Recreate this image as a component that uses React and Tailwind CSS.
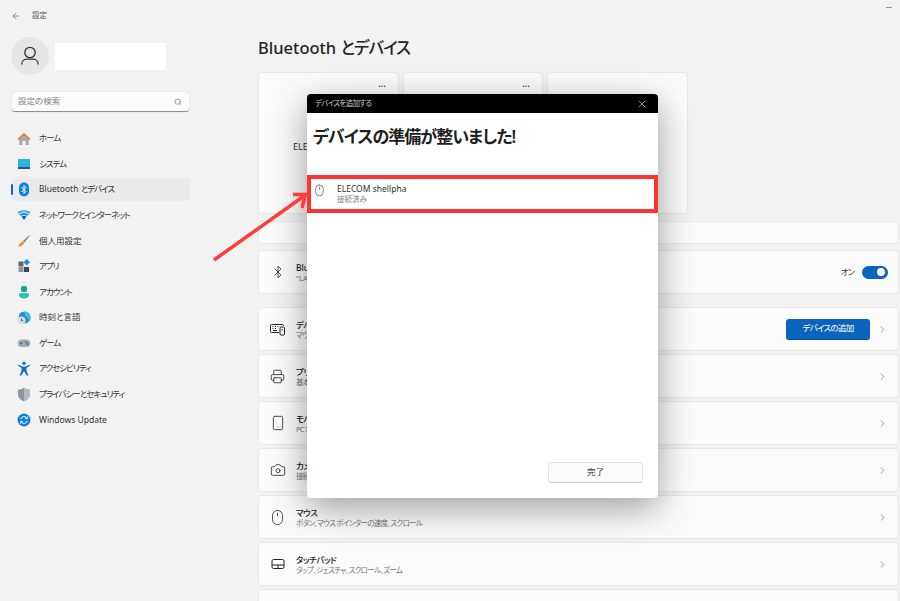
import React from "react";
import { ArrowLeft, Bluetooth, Camera, ChevronRight, Mouse, Printer, Search, Smartphone, X } from "lucide-react";

const FONT = "font-['Noto_Sans','Noto_Sans_CJK_JP',sans-serif] [font-feature-settings:'palt']";

const AvatarIcon = () => (
  <svg width="20" height="20" viewBox="0 0 20 20" fill="none" stroke="#333" strokeWidth="1.300">
    <circle cx="10" cy="6.500" r="5.200" />
    <path d="M1.800 18.500c0-3.200 2.200-5.300 4.700-5.300h7c2.500 0 4.700 2.100 4.700 5.300" />
  </svg>
);
const HomeIcon = () => (
  <svg width="14" height="14" viewBox="0 0 14 14">
    <path d="M2.200 6.500 7 2.500l4.800 4V13H8.600V9H5.400v4H2.200z" fill="#a8adb3" />
    <path d="M.6 7 7 1l6.400 6-.9.9L7 2.900 1.500 7.900z" fill="#e8701a" />
  </svg>
);
const SystemIcon = () => (
  <svg width="14" height="14" viewBox="0 0 14 14">
    <rect x="1" y="2" width="12" height="8" fill="#2fb2d8" />
    <rect x="1" y="10" width="12" height="2" fill="#0f5f8f" />
  </svg>
);
const BtIcon = () => (
  <svg width="12" height="15" viewBox="0 0 12 15">
    <rect x="1" y="0.500" width="10" height="14" rx="5" fill="#0a84e0" />
    <path d="M3.500 5 8 9.500 6 11.500V3.500l2 2L3.500 10" fill="none" stroke="#fff" strokeWidth="1" />
  </svg>
);
const WifiIcon = () => (
  <svg width="14" height="12" viewBox="0 0 14 12">
    <path d="M.5 3.500C4 .5 10 .5 13.500 3.500L12 5C9 2.800 5 2.800 2 5z" fill="#35b4f0" />
    <path d="M2.500 5.500C5 3.500 9 3.500 11.500 5.500L10 7C8 5.800 6 5.800 4 7z" fill="#1a8fe0" />
    <path d="M4.500 7.500C6 6.500 8 6.500 9.500 7.500L7 11z" fill="#0a5fb0" />
  </svg>
);
const BrushIcon = () => (
  <svg width="14" height="14" viewBox="0 0 14 14">
    <path d="M12.500 1 13 1.500 7.500 8.500 5.800 7z" fill="#8b8f94" />
    <path d="M5.500 7.300 7.200 8.800C6.500 11 4 12.800 1 13c1.500-1.500 1.800-4.500 4.500-5.700z" fill="#ee8a2c" />
  </svg>
);
const AppsIcon = () => (
  <svg width="14" height="14" viewBox="0 0 14 14">
    <rect x="1.500" y="2.500" width="5" height="5" fill="#5c6670" />
    <rect x="1.500" y="8" width="5" height="5" fill="#8d949b" />
    <rect x="7" y="8" width="5" height="5" fill="#3f474f" />
    <rect x="7.500" y="1" width="4.500" height="4.500" fill="#1f8fe6" transform="rotate(45 9.750 3.250)" />
  </svg>
);
const AccountIcon = () => (
  <svg width="14" height="14" viewBox="0 0 14 14">
    <circle cx="7" cy="4" r="3.200" fill="#1fa08f" />
    <path d="M2 9.500C2 8.500 3 8 4 8h6c1 0 2 .5 2 1.500C12 12.500 9.500 13.500 7 13.500S2 12.500 2 9.500z" fill="#2cc4ae" />
  </svg>
);
const TimeIcon = () => (
  <svg width="14" height="14" viewBox="0 0 14 14">
    <circle cx="7.500" cy="6.500" r="6" fill="#1e93cf" />
    <path d="M7.500.5a6 6 0 0 1 6 6c0 1-.3 2-.7 2.800L8 4.500z" fill="#37c0e0" />
    <circle cx="4.500" cy="9.500" r="4" fill="#d9dde1" />
    <path d="M4.500 7.500v2.200h1.800" fill="none" stroke="#445" strokeWidth=".8" />
  </svg>
);
const GameIcon = () => (
  <svg width="14" height="14" viewBox="0 0 14 14">
    <rect x="0.800" y="3.500" width="12.400" height="7.500" rx="3.700" fill="#a3a9af" />
    <path d="M3 7.200h2.400M4.200 6v2.400" stroke="#444c54" strokeWidth=".8" />
    <circle cx="9" cy="6.300" r=".9" fill="#1b6fc4" />
    <circle cx="10.400" cy="8" r=".9" fill="#1b6fc4" />
  </svg>
);
const AccessIcon = () => (
  <svg width="14" height="15" viewBox="0 0 14 15">
    <circle cx="7" cy="2.200" r="1.700" fill="#0f6fc6" />
    <path d="M1.500 3.500 5 5.400h4l3.500-1.900.6 1.100L9.500 7v2.500l1.800 5h-1.500L7 10l-2.800 4.500H2.700l1.800-5V7L.9 4.600z" fill="#0f6fc6" />
  </svg>
);
const ShieldIcon = () => (
  <svg width="14" height="15" viewBox="0 0 14 15">
    <path d="M7 .8c1.800 1.300 3.700 1.900 6 2v4.500c0 3.300-2.500 5.800-6 7-3.500-1.200-6-3.700-6-7V2.800c2.300-.1 4.200-.7 6-2z" fill="#8d979f" />
    <path d="M7 .8c1.800 1.300 3.700 1.900 6 2v4.500c0 3.300-2.500 5.800-6 7z" fill="#b3bac0" />
  </svg>
);
const UpdateIcon = () => (
  <svg width="14" height="14" viewBox="0 0 14 14">
    <circle cx="7" cy="7" r="6.500" fill="#0f7fdb" />
    <path d="M3.700 6.200A3.400 3.400 0 0 1 9.800 5M10.300 7.800A3.400 3.400 0 0 1 4.200 9" fill="none" stroke="#fff" strokeWidth="1" />
    <path d="M10.300 3.300v2.300H8M3.700 10.700V8.400H6" fill="none" stroke="#fff" strokeWidth=".9" />
  </svg>
);
const KeyboardIcon = () => (
  <svg width="15" height="14" viewBox="0 0 15 14" fill="none" stroke="#222" strokeWidth="1">
    <path d="M9 10.500H1.500a1 1 0 0 1-1-1v-6a1 1 0 0 1 1-1h11a1 1 0 0 1 1 1V4" />
    <path d="M2.500 4.500h1M5 4.500h1M7.500 4.500h1M2.500 6.500h1M5 6.500h1M3 8.500h4" />
    <rect x="10" y="5" width="4.500" height="8" rx="1" />
    <path d="M12.200 7v1.500" />
  </svg>
);
const TouchpadIcon = () => (
  <svg width="14" height="12" viewBox="0 0 14 12" fill="none" stroke="#222" strokeWidth="1">
    <rect x="1" y="1.500" width="12" height="9" rx="1.500" />
    <path d="M1 7h12M7 7v3.500" />
  </svg>
);

const KANA = "tracking-[-1px]";
const nav = [
  [HomeIcon, "ホーム", KANA],
  [SystemIcon, "システム", KANA],
  [BtIcon, <>Bluetooth <span className={KANA}>とデバイス</span></>, "", true],
  [WifiIcon, "ネットワークとインターネット", KANA],
  [BrushIcon, "個人用設定", ""],
  [AppsIcon, "アプリ", KANA],
  [AccountIcon, "アカウント", KANA],
  [TimeIcon, "時刻と言語", ""],
  [GameIcon, "ゲーム", KANA],
  [AccessIcon, "アクセシビリティ", KANA],
  [ShieldIcon, "プライバシーとセキュリティ", KANA],
  [UpdateIcon, "Windows Update", ""],
];

const rows = [
  [<KeyboardIcon />, "デバイス", "マウス、キーボード、ペン、オーディオ、ディスプレイ、ドック、その他", true],
  [<Printer size={15} strokeWidth={1.300} color="#222" />, "プリンターとスキャナー", "基本設定、トラブルシューティング"],
  [<Smartphone size={16} strokeWidth={1.200} color="#222" />, "モバイル デバイス", "PC からモバイル デバイスにすぐにアクセスする"],
  [<Camera size={16} strokeWidth={1.200} color="#222" />, "カメラ", "接続されたカメラ、既定の画像設定"],
  [<Mouse size={17} strokeWidth={1.100} color="#222" />, "マウス", "ボタン、マウス ポインターの速度、スクロール"],
  [<TouchpadIcon />, "タッチパッド", "タップ、ジェスチャ、スクロール、ズーム"],
];

function DeviceCard({ name, className, dots = true }) {
  return (
    <div className={`relative h-[142px] rounded-[4px] border border-[#e8e8e8] bg-[#fbfbfb] ${className}`}>
      {dots && <span className="absolute right-[12px] top-[3px] text-[10px] leading-[14px] text-[#333]">…</span>}
      {name && <div className="absolute left-[34px] top-[67px] text-[9px] leading-[13px] text-[#333]">{name}</div>}
    </div>
  );
}

function Row({ icon, title, sub, button }) {
  return (
    <div className="flex h-[44px] shrink-0 items-center rounded-[4px] border border-[#e8e8e8] bg-[#fbfbfb] pl-[10px] pr-[10px]">
      <div className="flex w-[17px] justify-center">{icon}</div>
      <div className="ml-[10px] flex-1">
        <div className="text-[8.500px] font-medium leading-[11px] tracking-[-0.500px] text-[#222]">{title}</div>
        <div className="text-[7.500px] leading-[10px] tracking-[-0.700px] text-[#777]">{sub}</div>
      </div>
      {button && (
        <div className="mr-[7px] flex h-[21px] w-[84px] items-center justify-center rounded-[3px] border-b border-[#0a4d94] bg-[#0a64bd] text-[8.500px] tracking-[-0.700px] text-white">
          デバイスの追加
        </div>
      )}
      <ChevronRight size={11} strokeWidth={1.300} color="#666" />
    </div>
  );
}

export default function App() {
  return (
    <div className={`relative flex h-[601px] w-[900px] overflow-hidden bg-[#f2f2f2] ${FONT}`}>
      <aside className="w-[200px] shrink-0">
        <div className="flex h-[31px] items-center pl-[11px]">
          <ArrowLeft size={10} strokeWidth={1.300} color="#444" />
          <span className="ml-[11px] text-[7.500px] text-[#555]">設定</span>
        </div>
        <div className="ml-[11px] mt-[6px] flex h-[38px] items-center">
          <div className="flex h-[38px] w-[38px] items-center justify-center rounded-full bg-[#e6e6e6]">
            <AvatarIcon />
          </div>
          <div className="ml-[6px] h-[27px] w-[111px] bg-white" />
        </div>
        <div className="ml-[12px] mt-[17px] flex h-[20px] w-[177px] items-center justify-between rounded-[3px] border-b border-[#8f8f8f] bg-[#fbfbfb] pl-[6px] pr-[7px] shadow-[0_0_1px_rgba(0,0,0,0.3)]">
          <span className="text-[8.500px] text-[#888]">設定の検索</span>
          <Search size={8} strokeWidth={1.600} color="#555" />
        </div>
        <nav className="ml-[11px] mt-[15px] grid w-[179px] auto-rows-[23px] gap-y-[2.600px]">
          {nav.map(([Icon, label, tracking, active], i) => (
            <div key={i} className={`relative flex items-center rounded-[4px] pl-[6px] ${active ? "bg-[#eaeaea]" : ""}`}>
              {active && <span className="absolute left-0 top-[6px] h-[11px] w-[2px] rounded-full bg-[#0a64bd]" />}
              <span className="flex w-[14px] justify-center"><Icon /></span>
              <span className={`ml-[8px] text-[8.500px] text-[#333] ${tracking}`}>{label}</span>
            </div>
          ))}
        </nav>
      </aside>

      <main className="flex min-w-0 flex-1 flex-col pl-[58px] pr-px">
        <h1 className="mt-[36px] h-[24px] text-[16.500px] font-medium leading-[24px] text-[#222]">
          Bluetooth <span className="tracking-[-1px]">とデバイス</span>
        </h1>
        <div className="mt-[12px] flex gap-[4px]">
          <DeviceCard name="ELE" className="w-[141px]" />
          <DeviceCard className="w-[140px]" />
          <DeviceCard className="w-[141px]" dots={false} />
        </div>
        <div className="mt-[7px] h-[23px] shrink-0 rounded-[4px] border border-[#e8e8e8] bg-[#fbfbfb]" />
        <div className="mt-[6px] flex h-[44px] shrink-0 items-center rounded-[4px] border border-[#e8e8e8] bg-[#fbfbfb] pl-[10px] pr-[10px]">
          <div className="flex w-[17px] justify-center"><Bluetooth size={14} strokeWidth={1.300} color="#222" /></div>
          <div className="ml-[10px] flex-1">
            <div className="text-[8.500px] font-medium leading-[11px] text-[#222]">Bluetooth</div>
            <div className="text-[7.500px] leading-[10px] text-[#777]">"LAPTOP" として検出可能</div>
          </div>
          <span className="mr-[8px] text-[8.500px] tracking-[-1px] text-[#333]">オン</span>
          <div className="flex h-[13px] w-[26px] items-center justify-end rounded-full bg-[#0a64bd] pr-[3px]">
            <span className="h-[8px] w-[8px] rounded-full bg-white" />
          </div>
        </div>
        <div className="mt-[13px] flex flex-col gap-[3px]">
          {rows.map(([icon, title, sub, button]) => (
            <Row key={title} icon={icon} title={title} sub={sub} button={button} />
          ))}
          <div className="h-[44px] shrink-0 rounded-[4px] border border-[#e8e8e8] bg-[#fbfbfb]" />
        </div>
      </main>

      <div className="absolute right-[8px] top-[7px] h-px w-[6px] bg-[#999]" />

      <div className="absolute left-[307px] top-[94px] flex h-[404px] w-[351px] flex-col overflow-hidden rounded-[4px] bg-white shadow-[0_10px_36px_rgba(0,0,0,0.38)]">
        <div className="flex h-[19px] shrink-0 items-center justify-between bg-black pl-[8px] pr-[10px]">
          <span className="text-[7.500px] tracking-[-0.700px] text-[#ccc]">デバイスを追加する</span>
          <X size={12} strokeWidth={1.200} color="#eee" />
        </div>
        <div className="ml-[6px] mt-[11px] h-[26px] text-[17px] font-semibold leading-[26px] tracking-[-1px] text-[#1f1f1f]">デバイスの準備が整いました!</div>
        <div className="mt-[25px] flex h-[38px] shrink-0 items-start border-[4px] border-[#ff3333] pl-[2px] pt-[4px]">
          <Mouse size={13} strokeWidth={1.100} color="#333" className="mt-[1px]" />
          <div className="ml-[11px]">
            <div className="text-[8.500px] leading-[11px] text-[#333]">ELECOM shellpha</div>
            <div className="text-[7.500px] leading-[10px] text-[#888]">接続済み</div>
          </div>
        </div>
        <div className="flex flex-1 items-end justify-end pb-[15px] pr-[15px]">
          <div className="flex h-[21px] w-[95px] items-center justify-center rounded-[3px] border border-[#e5e5e5] border-b-[#cfcfcf] bg-[#fbfbfb] text-[8.500px] text-[#333]">
            完了
          </div>
        </div>
      </div>

      <svg className="absolute left-[210px] top-[185px]" width="100" height="80" viewBox="0 0 100 80">
        <path d="M4 75 94 11" stroke="#ff3b3b" strokeWidth="3.500" fill="none" />
        <path d="M83 9.500H95.500L92 23" stroke="#ff3b3b" strokeWidth="3.500" fill="none" />
      </svg>
    </div>
  );
}
